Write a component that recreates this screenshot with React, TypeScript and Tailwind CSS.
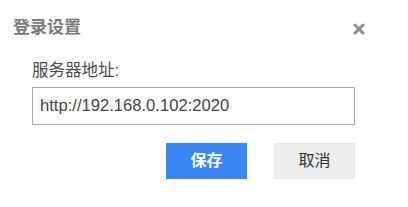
import React from "react";

export default function App() {
  const cjk = { fontFamily: '"Liberation Sans", "Noto Sans CJK SC", sans-serif' };
  return (
    <div className="w-[408px] h-[207px] bg-white" style={cjk}>
      <div className="flex items-center justify-between pl-[13px] pr-[43px] pt-[16px]">
        <span className="text-[17px] leading-[24px] font-bold text-[#7a7a7a]">登录设置</span>
        <svg width="12" height="12" viewBox="0 0 12 12" className="mt-[1px]">
          <path d="M2 2 L10 10 M10 2 L2 10" stroke="#8f8f8f" strokeWidth="3" strokeLinecap="round" />
        </svg>
      </div>
      <div className="pl-[32px] pr-[53px] pt-[18px]">
        <div className="text-[16.5px] leading-[24px] text-[#4a4a4a]">服务器地址:</div>
        <div className="mt-[5px] h-[38px] border border-[#a9a9a9] flex items-center pl-[7px] text-[16.6px] text-[#444]">
          http://192.168.0.102:2020
        </div>
        <div className="mt-[18px] flex justify-end gap-[27px]">
          <button className="w-[81px] h-[36px] bg-[#3a86f5] text-white text-[16px] font-bold">保存</button>
          <button className="w-[81px] h-[36px] bg-[#efefef] border border-[#e6e6e6] text-[#333] text-[16px]">取消</button>
        </div>
      </div>
    </div>
  );
}
